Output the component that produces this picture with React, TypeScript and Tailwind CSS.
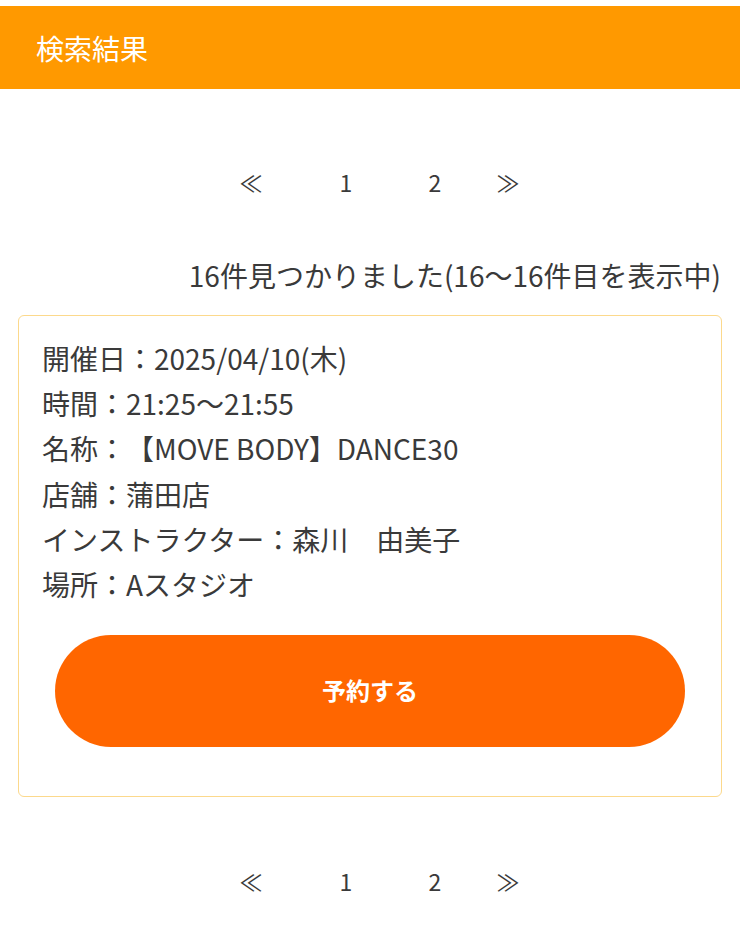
const font = { fontFamily: '"Noto Sans CJK JP", "Noto Sans", sans-serif' }

function Pager() {
  return (
    <div className="flex items-center justify-center pl-[19px] text-[23px] leading-[30px] text-[#3a3a3a]">
      <span className="w-6 text-center">≪</span>
      <span className="ml-[71px] w-6 text-center">1</span>
      <span className="ml-[65px] w-6 text-center">2</span>
      <span className="ml-[49px] w-6 text-center">≫</span>
    </div>
  )
}

const rows = [
  '開催日：2025/04/10(木)',
  '時間：21:25〜21:55',
  '名称：【MOVE BODY】DANCE30',
  '店舗：蒲田店',
  'インストラクター：森川　由美子',
  '場所：Aスタジオ',
]

export default function App() {
  return (
    <div className="min-h-screen bg-white pt-[6px] [text-spacing-trim:space-all]" style={font}>
      <header className="flex h-[83px] items-center bg-[#ff9900] px-[36px]">
        <h1 className="text-[28px] font-normal text-white">検索結果</h1>
      </header>

      <div className="mt-[78px]">
        <Pager />
      </div>

      <p className="mt-[58px] pr-[19px] text-right text-[28px] leading-[40px] text-[#3a3a3a]">
        16件見つかりました(16〜16件目を表示中)
      </p>

      <div className="mx-[18px] mt-[20px] rounded-[6px] border border-[#fcd98c] px-[23px] pb-[49px] pt-[20px]">
        <div className="text-[28px] leading-[45.2px] text-[#3a3a3a]">
          {rows.map((r) => (
            <p key={r}>{r}</p>
          ))}
        </div>
        <button
          type="button"
          className="mx-[13px] mt-[28px] flex h-[112px] w-[calc(100%-26px)] items-center justify-center rounded-full bg-[#ff6600] pb-[3px] text-[24px] font-bold text-white"
        >
          予約する
        </button>
      </div>

      <div className="mt-[69px] pb-10">
        <Pager />
      </div>
    </div>
  )
}
